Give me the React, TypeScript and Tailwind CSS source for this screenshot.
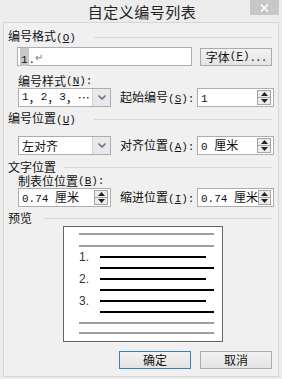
import type { ReactNode } from 'react';

// latin text in the dialog is drawn like SimSun's half-width glyphs
const L = ({ children }: { children: ReactNode }) => (
  <span className="font-['Liberation_Mono',monospace] text-[11px]">{children}</span>
);

const Key = ({ children }: { children: ReactNode }) => (
  <L>(<span className="underline underline-offset-[1px]">{children}</span>)</L>
);

const GroupLabel = ({ text, k, line }: { text: string; k?: string; line: string }) => (
  <div className="flex items-center h-[14px] pl-[4px] pr-[6px]">
    <span className="text-[12px] leading-none whitespace-nowrap">
      {text}
      {k && <Key>{k}</Key>}
    </span>
    <div className={`flex-1 h-px bg-[#d8d8d8] ${line}`}></div>
  </div>
);

const FieldLabel = ({ children }: { children: ReactNode }) => (
  <div className="h-[12px] flex items-center pl-[14px] text-[12px] leading-none whitespace-nowrap">{children}</div>
);

const SpinArrows = () => (
  <div className="flex flex-col w-[14px] h-[15px] border border-[#a5a5a5] bg-[#ebebeb]">
    <div className="flex-1 flex items-center justify-center border-b border-[#a5a5a5]">
      <svg width="7" height="4" viewBox="0 0 7 4"><path d="M0 4 L3.5 0 L7 4 Z" fill="#222" /></svg>
    </div>
    <div className="flex-1 flex items-center justify-center">
      <svg width="7" height="4" viewBox="0 0 7 4"><path d="M0 0 L3.5 4 L7 0 Z" fill="#222" /></svg>
    </div>
  </div>
);

const Spin = ({ children, w }: { children: ReactNode; w: string }) => (
  <div className={`flex items-center h-[19px] ${w} border border-[#abadb3] bg-white pl-[3px] pr-[2px]`}>
    <span className="flex-1 text-[12px] leading-none whitespace-nowrap">{children}</span>
    <SpinArrows />
  </div>
);

const Select = ({ children }: { children: ReactNode }) => (
  <div className="flex h-[19px] w-[93px] border border-[#abadb3] bg-white">
    <span className="flex-1 flex items-center pl-[3px] text-[12px] leading-none whitespace-nowrap">{children}</span>
    <div className="w-[18px] flex items-center justify-center bg-[#e9e9e9] border-l border-[#d3d3d3]">
      <svg width="8" height="5" viewBox="0 0 8 5"><path d="M0.5 0.5 L4 4 L7.5 0.5" stroke="#5a6f86" strokeWidth="1.5" fill="none" /></svg>
    </div>
  </div>
);

const PreviewItem = ({ n }: { n: string }) => (
  <>
    <div className="flex items-center h-[2px] mt-[9px]">
      <span className="w-[21px] text-[12px] leading-none text-[#333] font-['Liberation_Sans',sans-serif]">{n}</span>
      <div className="h-[2px] w-[106px] bg-black"></div>
    </div>
    <div className="h-[2px] w-[114px] ml-[21px] mt-[9px] bg-black"></div>
  </>
);

const Button = ({ children, def }: { children: ReactNode; def?: boolean }) => (
  <div
    className={`w-[72px] h-[18px] flex items-center justify-center border bg-gradient-to-b from-[#f2f2f2] to-[#e4e4e4] text-[12px] leading-none ${
      def ? 'border-[#3c7fb1]' : 'border-[#acacac]'
    }`}
  >
    {children}
  </div>
);

export default function App() {
  return (
    <div className="relative w-[282px] h-[379px] bg-[#ececec] overflow-hidden text-[#111] font-['Noto_Sans_CJK_SC',sans-serif]">
      {/* Title bar */}
      <div className="h-[22px] flex items-center justify-center pl-[2px]">
        <span className="text-[15px] leading-none text-[#222] tracking-[0.5px]">自定义编号列表</span>
      </div>
      <div className="absolute right-[3px] top-0 w-[29px] h-[15px] bg-[#c7c7c7] flex items-center justify-center">
        <svg width="9" height="8" viewBox="0 0 9 8"><path d="M1 0.5 L8 7.5 M8 0.5 L1 7.5" stroke="#fff" strokeWidth="1.6" /></svg>
      </div>

      {/* Body */}
      <div className="mx-[3px] h-[355px] border border-[#d6d6d6] bg-[#f0f0f0] pt-[7px]">
        <GroupLabel text="编号格式" k="O" line="ml-[18px]" />
        <div className="flex items-center mt-[3px] pl-[13px]">
          <div className="flex items-center w-[175px] h-[19px] border border-[#abadb3] bg-white pl-[2px]">
            <span className="bg-[#c8c8c8] px-px leading-none"><L>1</L></span>
            <span className="leading-none"><L>.</L></span>
            <span className="text-[10px] leading-none text-[#777]">↵</span>
          </div>
          <div className="ml-[8px]">
            <Button>
              字体<Key>F</Key><span className="tracking-[-1px]"><L>...</L></span>
            </Button>
          </div>
        </div>

        <div className="mt-[9px]">
          <FieldLabel>编号样式<Key>N</Key><L>:</L></FieldLabel>
        </div>
        <div className="flex items-center mt-[1px] pl-[14px]">
          <Select><L>1</L>，<L>2</L>，<L>3</L>，⋯</Select>
          <span className="ml-[9px] w-[77px] text-[12px] leading-none whitespace-nowrap">起始编号<Key>S</Key><L>:</L></span>
          <Spin w="w-[77px]"><L>1</L></Spin>
        </div>

        <div className="mt-[5px]">
          <GroupLabel text="编号位置" k="U" line="ml-[18px]" />
        </div>
        <div className="flex items-center mt-[10px] pl-[14px]">
          <Select>左对齐</Select>
          <span className="ml-[9px] w-[77px] text-[12px] leading-none whitespace-nowrap">对齐位置<Key>A</Key><L>:</L></span>
          <Spin w="w-[77px]"><L>0 </L>厘米</Spin>
        </div>

        <div className="mt-[5px]">
          <GroupLabel text="文字位置" line="ml-[8px]" />
        </div>
        <div className="mt-[1px]">
          <FieldLabel>制表位位置<Key>B</Key><L>:</L></FieldLabel>
        </div>
        <div className="flex items-center mt-[1px] pl-[14px]">
          <Spin w="w-[93px]"><L>0.74 </L>厘米</Spin>
          <span className="ml-[9px] w-[77px] text-[12px] leading-none whitespace-nowrap">缩进位置<Key>I</Key><L>:</L></span>
          <Spin w="w-[77px]"><L>0.74 </L>厘米</Spin>
        </div>

        <div className="mt-[4px]">
          <GroupLabel text="预览" line="ml-[12px]" />
        </div>
        <div className="ml-[59px] mt-[1px] w-[160px] h-[116px] border border-[#666] bg-white pl-[15px] flex flex-col">
          <div className="h-[2px] w-[135px] mt-[6px] bg-[#a0a0a0]"></div>
          <div className="h-[2px] w-[135px] mt-[10px] bg-[#a0a0a0]"></div>
          <PreviewItem n="1." />
          <PreviewItem n="2." />
          <PreviewItem n="3." />
          <div className="h-[2px] w-[135px] mt-[9px] bg-[#a0a0a0]"></div>
          <div className="h-[2px] w-[135px] mt-[8px] bg-[#a0a0a0]"></div>
        </div>

        <div className="flex mt-[9px] pl-[115px] gap-[9px]">
          <Button def>确定</Button>
          <Button>取消</Button>
        </div>
      </div>
    </div>
  );
}
